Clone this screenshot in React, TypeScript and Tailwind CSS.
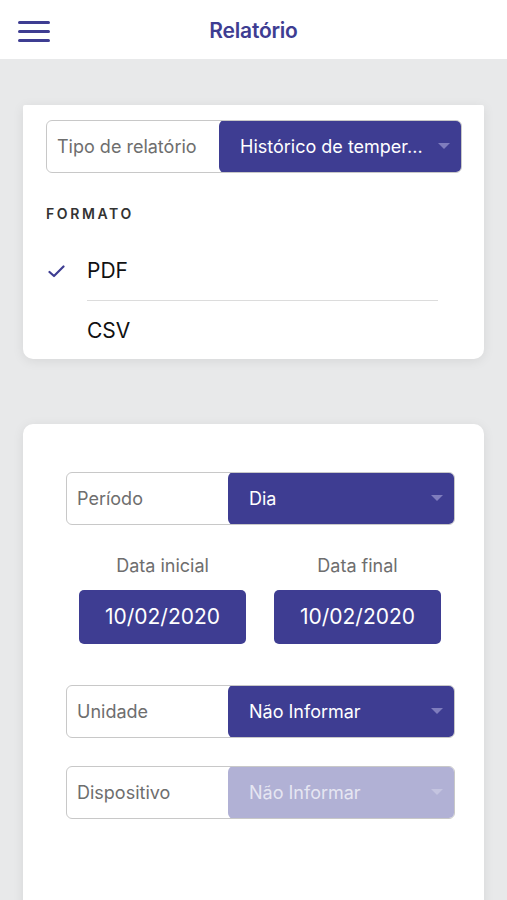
import React from "react";

const Arrow = ({ light }: { light?: boolean }) => (
  <svg width="12" height="7" viewBox="0 0 12 7" className="shrink-0">
    <path d="M0 0 L12 0 L6 6 Z" fill={light ? "#c4c4e0" : "#7f7dbd"} />
  </svg>
);

function Select({
  label,
  value,
  labelW,
  disabled,
}: {
  label: string;
  value: string;
  labelW: string;
  disabled?: boolean;
}) {
  return (
    <div className="flex h-[53px] rounded-[6px] border border-[#c8c8c8] bg-white overflow-hidden">
      <div className={`${labelW} flex items-center pl-[10px] text-[18px] text-[#6e6e6e] shrink-0`}>{label}</div>
      <div
        className={`flex-1 flex items-center justify-between pl-[21px] pr-[12px] rounded-[6px] -my-px -mr-px text-[18px] ${
          disabled ? "bg-[#b1b1d5] text-[#e6e6f2]" : "bg-[#3e3d92] text-white"
        }`}
      >
        <span className="truncate">{value}</span>
        <Arrow light={disabled} />
      </div>
    </div>
  );
}

export default function App() {
  return (
    <div className="w-[507px] h-[900px] overflow-hidden bg-[#e8e9ea] font-['Inter',sans-serif]">
      <header className="h-[59px] bg-white relative flex items-center justify-center pt-[3px]">
        <div className="absolute left-[18px] top-[21px] flex flex-col gap-[6px]">
          <div className="w-[32px] h-[3px] bg-[#3e3d92] rounded-full" />
          <div className="w-[32px] h-[3px] bg-[#3e3d92] rounded-full" />
          <div className="w-[32px] h-[3px] bg-[#3e3d92] rounded-full" />
        </div>
        <h1 className="text-[21px] font-semibold text-[#3e3d92] tracking-[-0.2px]">Relatório</h1>
      </header>

      <div className="px-[23px] pt-[46px]">
        <section className="h-[254px] bg-white rounded-b-[10px] rounded-t-[2px] shadow-[0_2px_12px_rgba(0,0,0,0.08)] pt-[15px] pl-[23px] pr-[22px] overflow-hidden">
          <Select label="Tipo de relatório" value="Histórico de temper..." labelW="w-[172px]" />
          <div className="mt-[34px] text-[14px] font-semibold tracking-[2.6px] text-[#333] leading-none">FORMATO</div>
          <div className="mt-[21px]">
            <div className="flex items-center h-[58px]">
              <svg width="17" height="13" viewBox="0 0 17 13" className="ml-[2px]">
                <path d="M1.5 7 L6 11 L15.5 1.5" stroke="#3e3d92" strokeWidth="2.2" fill="none" strokeLinecap="round" strokeLinejoin="round" />
              </svg>
              <div className="ml-[22px] flex-1 h-full flex items-center text-[21px] text-[#111] mr-[24px]">PDF</div>
            </div>
            <div className="ml-[41px] mr-[24px] h-px bg-[#dcdcdc]" />
            <div className="flex items-center h-[58px] pt-[2px]">
              <div className="ml-[41px] text-[21px] text-[#111]">CSV</div>
            </div>
            <div className="ml-[41px] mr-[24px] h-px bg-[#dcdcdc]" />
          </div>
        </section>

        <section className="mt-[65px] h-[600px] bg-white rounded-t-[10px] shadow-[0_2px_12px_rgba(0,0,0,0.08)] pt-[48px] pl-[43px] pr-[29px]">
          <Select label="Período" value="Dia" labelW="w-[161px]" />
          <div className="mt-[30px] flex pl-[13px] gap-[28px]">
            {["Data inicial", "Data final"].map((l) => (
              <div key={l} className="w-[167px] flex flex-col items-center">
                <div className="text-[18px] text-[#6e6e6e] leading-[22px]">{l}</div>
                <div className="mt-[13px] w-full h-[54px] rounded-[5px] bg-[#3e3d92] text-white text-[21px] flex items-center justify-center">
                  10/02/2020
                </div>
              </div>
            ))}
          </div>
          <div className="mt-[41px]">
            <Select label="Unidade" value="Não Informar" labelW="w-[161px]" />
          </div>
          <div className="mt-[28px]">
            <Select label="Dispositivo" value="Não Informar" labelW="w-[161px]" disabled />
          </div>
        </section>
      </div>
    </div>
  );
}
